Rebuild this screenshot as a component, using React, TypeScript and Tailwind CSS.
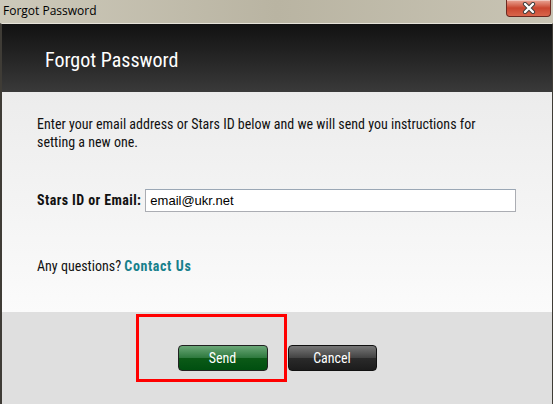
import React from "react";

const narrow = "font-['Liberation_Sans_Narrow','Roboto_Condensed',Roboto,sans-serif]";

function CloseButton() {
  return (
    <div className="absolute right-[2px] top-0 flex h-[17px] w-[45px] items-center justify-center rounded-b-[4px] border border-t-0 border-[#6b2a22] bg-gradient-to-b from-[#e9a596] via-[#c9452f] to-[#d9654c] shadow-[inset_0_1px_0_rgba(255,255,255,0.4)]">
      <svg width="14" height="12" viewBox="0 0 14 12">
        <path
          d="M3 2 L11 10 M11 2 L3 10"
          stroke="#3c3c3c"
          strokeWidth="4.2"
          strokeLinecap="round"
          fill="none"
        />
        <path
          d="M3 2 L11 10 M11 2 L3 10"
          stroke="#ffffff"
          strokeWidth="2.4"
          strokeLinecap="round"
          fill="none"
        />
      </svg>
    </div>
  );
}

export default function App() {
  return (
    <div className="relative h-[404px] w-[553px] overflow-hidden bg-[#c6c2b2]">
      {/* Window title bar */}
      <div className="relative h-[23px] bg-gradient-to-r from-[#cdc9ba] via-[#b9b4a2] to-[#c8c4b4]">
        <span className="absolute left-[3px] top-[3px] font-['Open_Sans',sans-serif] text-[12px] leading-[15px] text-black">
          Forgot Password
        </span>
        <CloseButton />
      </div>

      <div className="flex h-[381px] flex-col border-l-2 border-r border-t border-l-[#3f3c36] border-r-[#3f3c36] border-t-[#e6e3da]">
        {/* Dark header */}
        <div className="flex h-[68px] items-center bg-gradient-to-b from-[#121212] to-[#3a3a3a] pl-[43px] pt-[3px]">
          <h1 className={`${narrow} text-[20px] leading-none text-white`}>Forgot Password</h1>
        </div>

        {/* Content */}
        <div className={`${narrow} flex h-[220px] flex-col bg-gradient-to-b from-[#ececec] to-[#fbfbfb] pl-[35px] pr-[30px] text-[14px] text-[#111]`}>
          <p className="mt-[23px] pr-[10px] leading-[18px]">
            Enter your email address or Stars ID below and we will send you instructions for setting a new one.
          </p>
          <div className="mt-[38px] flex items-center gap-[4px] whitespace-nowrap">
            <label className="shrink-0 font-bold tracking-[0.4px]">Stars ID or Email:</label>
            <div className="flex h-[23px] w-[371px] shrink-0 items-center border border-[#abadb3] border-t-[#9aa7b5] bg-white pl-[4px] font-['Liberation_Sans',Arial,sans-serif] text-[13px] text-black">
              email@ukr.net
            </div>
          </div>
          <p className="mt-[44px]">
            Any questions?{" "}
            <span className="font-bold tracking-[0.6px] text-[#16808c]">Contact Us</span>
          </p>
        </div>

        {/* Footer */}
        <div className="flex flex-1 justify-center gap-[20px] bg-[#dfdfdf] pt-[33px]">
          <button className={`${narrow} h-[26px] w-[90px] rounded-[4px] border border-[#222] bg-[linear-gradient(#6aa777,#2f7a3f_48%,#0b5a17_52%,#004f10)] text-[14px] text-white`}>
            Send
          </button>
          <button className={`${narrow} h-[26px] w-[89px] rounded-[4px] border border-[#111] bg-[linear-gradient(#777,#444_48%,#2a2a2a_52%,#1c1c1c)] text-[14px] text-white`}>
            Cancel
          </button>
        </div>
      </div>

      {/* Red annotation box */}
      <div className="pointer-events-none absolute left-[136px] top-[314px] h-[68px] w-[151px] border-[3px] border-[#ff0000]" />
    </div>
  );
}
